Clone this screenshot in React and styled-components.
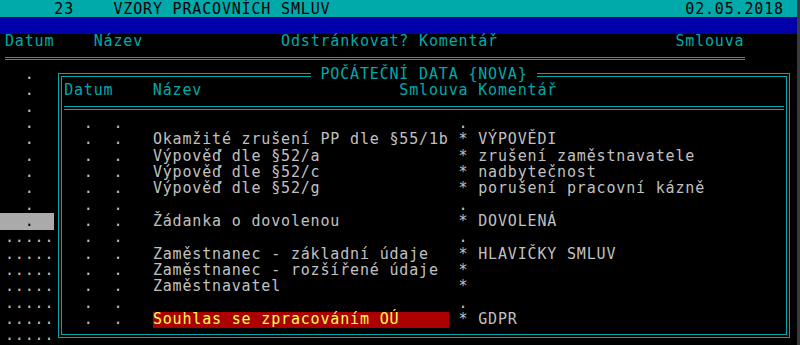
import React from "react";
import styled, { createGlobalStyle } from "styled-components";

const CW = 9.86;
const RH = 16.35;
const CYAN = "#00AAAA";
const GRAY = "#C0C0C0";

const GlobalStyle = createGlobalStyle`
  html, body { margin: 0; padding: 0; background: #000; overflow: hidden; }
`;

const place = (items, start = 0) => {
  let s = "";
  for (const [col, text] of items) {
    const rel = col - start;
    if (s.length < rel) s += " ".repeat(rel - s.length);
    s += text;
  }
  return s;
};

const Screen = styled.div`
  width: 800px;
  height: 345px;
  box-sizing: border-box;
  padding-top: 1px;
  background: #000;
  border-right: 3px solid #3a3a3a;
  overflow: hidden;
  font-family: "DejaVu Sans Mono", monospace;
  font-size: 15px;
  letter-spacing: ${CW - 15 * 0.6021}px;
  color: ${GRAY};
`;

const Line = styled.div`
  box-sizing: border-box;
  height: ${RH}px;
  line-height: ${RH - 0.6}px;
  padding-top: 0.6px;
  white-space: pre;
  padding-left: 5px;
`;

const TitleBar = styled(Line)`
  margin-top: -1px;
  height: ${RH + 1}px;
  padding-top: 1.8px;
  background: ${CYAN};
  color: #000;
`;

const MenuBar = styled.div`
  height: ${RH}px;
  background: #0000aa;
`;

const ColumnHeader = styled(Line)`
  color: ${CYAN};
`;

const SeparatorRow = styled.div`
  height: ${RH}px;
  display: flex;
  align-items: center;
  padding-left: ${(p) => p.$indent}px;
`;

const DoubleRule = styled.div`
  width: ${(p) => p.$cols * CW}px;
  height: ${(p) => p.$gap}px;
  border-top: 1px solid ${CYAN};
  border-bottom: 1px solid ${CYAN};
  margin-top: ${(p) => p.$shift}px;
`;

const Main = styled.div`
  display: flex;
  align-items: flex-start;
`;

const SideList = styled.div`
  width: ${5 + 5 * CW}px;
  flex-shrink: 0;
`;

const SideRow = styled(Line)`
  background: ${(p) => (p.$active ? "#AAAAAA" : "transparent")};
  color: ${(p) => (p.$active ? "#000" : GRAY)};
`;

const DialogArea = styled.div`
  flex: 1;
  padding-left: ${58 - (5 + 5 * CW)}px;
  padding-top: ${73 - (1 + 4 * RH)}px;
`;

const DialogFrame = styled.div`
  position: relative;
  width: 732px;
  height: 265px;
  box-sizing: border-box;
  border: 1px solid ${CYAN};
  padding: 2px;
`;

const DialogInner = styled.div`
  height: 100%;
  box-sizing: border-box;
  border: 1px solid ${CYAN};
  padding-top: ${1 + 5 * RH - 77}px;
  padding-left: ${5 + 6 * CW - 62}px;
`;

const DialogTitle = styled.div`
  position: absolute;
  left: ${5 + 31 * CW - 59}px;
  top: ${1 + 4 * RH - 74}px;
  box-sizing: border-box;
  height: ${RH}px;
  line-height: ${RH - 0.6}px;
  padding-top: 0.6px;
  white-space: pre;
  background: #000;
  color: ${CYAN};
`;

const DialogHeader = styled.div`
  box-sizing: border-box;
  height: ${RH}px;
  line-height: ${RH - 0.6}px;
  padding-top: 0.6px;
  white-space: pre;
  color: ${CYAN};
`;

const DialogRow = styled.div`
  display: flex;
  box-sizing: border-box;
  height: ${RH}px;
`;

const Cell = styled.div`
  box-sizing: border-box;
  height: ${RH}px;
  line-height: ${RH - 0.6}px;
  padding-top: 0.6px;
  width: ${(p) => (p.$w ? `${p.$w * CW}px` : "auto")};
  flex: ${(p) => (p.$w ? "0 0 auto" : "1")};
  white-space: pre;
  background: ${(p) => (p.$selected ? "#AA0000" : "transparent")};
  color: ${(p) => (p.$selected ? "#FFFF55" : GRAY)};
`;

const rows = [
  { name: "", flag: ".", comment: "" },
  { name: "Okamžité zrušení PP dle §55/1b", flag: "*", comment: "VÝPOVĚDI" },
  { name: "Výpověď dle §52/a", flag: "*", comment: "zrušení zaměstnavatele" },
  { name: "Výpověď dle §52/c", flag: "*", comment: "nadbytečnost" },
  { name: "Výpověď dle §52/g", flag: "*", comment: "porušení pracovní kázně" },
  { name: "", flag: ".", comment: "" },
  { name: "Žádanka o dovolenou", flag: "*", comment: "DOVOLENÁ" },
  { name: "", flag: ".", comment: "" },
  { name: "Zaměstnanec - základní údaje", flag: "*", comment: "HLAVIČKY SMLUV" },
  { name: "Zaměstnanec - rozšířené údaje", flag: "*", comment: "" },
  { name: "Zaměstnavatel", flag: "*", comment: "" },
  { name: "", flag: ".", comment: "" },
  { name: "Souhlas se zpracováním OÚ", flag: "*", comment: "GDPR", selected: true },
];

const sideRows = [
  ...Array.from({ length: 9 }, () => ({ text: "  .", active: false })),
  { text: "  .", active: true },
  ...Array.from({ length: 7 }, () => ({ text: ".....", active: false })),
];

export default function App() {
  return (
    <>
      <GlobalStyle />
      <Screen>
        <TitleBar>
          {place([
            [5, "23"],
            [11, "VZORY PRACOVNÍCH SMLUV"],
            [69, "02.05.2018"],
          ])}
        </TitleBar>
        <MenuBar />
        <ColumnHeader>
          {place([
            [0, "Datum"],
            [9, "Název"],
            [28, "Odstránkovat? Komentář"],
            [68, "Smlouva"],
          ])}
        </ColumnHeader>
        <SeparatorRow $indent={5}>
          <DoubleRule $cols={75} $gap={1} $shift={1} />
        </SeparatorRow>
        <Main>
          <SideList>
            {sideRows.map((r, i) => (
              <SideRow key={i} $active={r.active}>
                {r.text}
              </SideRow>
            ))}
          </SideList>
          <DialogArea>
            <DialogFrame>
              <DialogTitle> POČÁTEČNÍ DATA {"{NOVA}"} </DialogTitle>
              <DialogInner>
                <DialogHeader>
                  {place(
                    [
                      [6, "Datum"],
                      [15, "Název"],
                      [40, "Smlouva"],
                      [48, "Komentář"],
                    ],
                    6
                  )}
                </DialogHeader>
                <SeparatorRow $indent={0}>
                  <DoubleRule $cols={73} $gap={2} $shift={2} />
                </SeparatorRow>
                {rows.map((r, i) => (
                  <DialogRow key={i}>
                    <Cell $w={9}>{"  .  ."}</Cell>
                    <Cell $w={30} $selected={r.selected}>
                      {r.name}
                    </Cell>
                    <Cell $w={1} />
                    <Cell $w={1}>{r.flag}</Cell>
                    <Cell $w={1} />
                    <Cell>{r.comment}</Cell>
                  </DialogRow>
                ))}
              </DialogInner>
            </DialogFrame>
          </DialogArea>
        </Main>
      </Screen>
    </>
  );
}
